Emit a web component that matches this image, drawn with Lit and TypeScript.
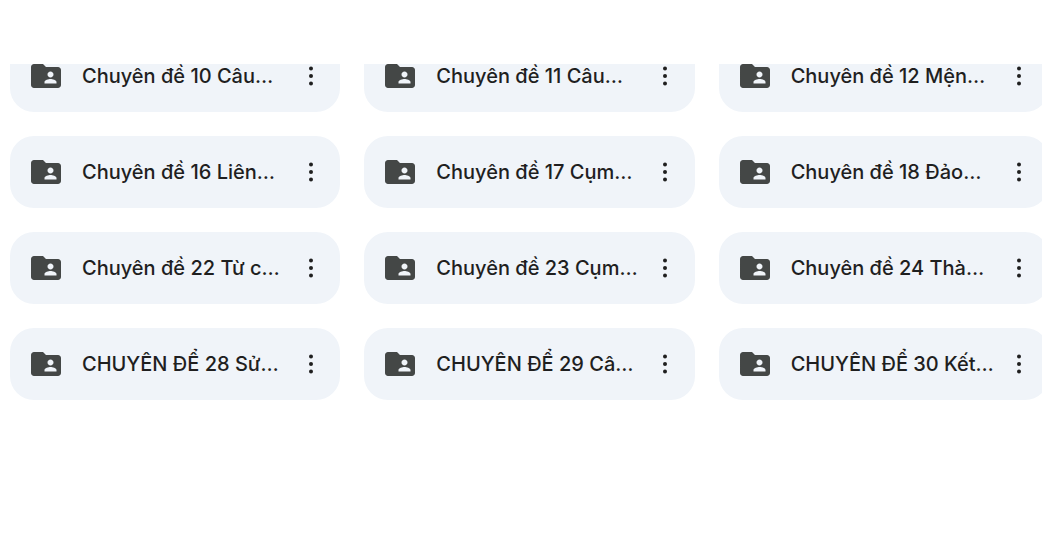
import { LitElement, css, html } from 'lit'
import { customElement } from 'lit/decorators.js'

const folders = [
  'Chuyên đề 10 Câu…',
  'Chuyên đề 11 Câu…',
  'Chuyên đề 12 Mện…',
  'Chuyên đề 16 Liên…',
  'Chuyên đề 17 Cụm…',
  'Chuyên đề 18 Đảo…',
  'Chuyên đề 22 Từ c…',
  'Chuyên đề 23 Cụm…',
  'Chuyên đề 24 Thà…',
  'CHUYÊN ĐỂ 28 Sử…',
  'CHUYÊN ĐỂ 29 Câ…',
  'CHUYÊN ĐỂ 30 Kết…',
]

@customElement('app-root')
export class AppRoot extends LitElement {
  static styles = css`
    :host {
      display: block;
      width: 1042px;
      height: 553px;
      overflow: hidden;
      background: #fff;
      font-family: Inter, Roboto, sans-serif;
    }
    .scroller {
      margin-top: 64px;
      height: 489px;
      overflow: hidden;
    }
    .grid {
      display: grid;
      grid-template-columns: repeat(3, 330.33px);
      gap: 24px;
      width: 1040px;
      margin-top: -24px;
      padding-left: 10px;
    }
    .card {
      display: flex;
      align-items: center;
      height: 72px;
      padding-left: 18px;
      border-radius: 24px;
      background: #f0f4f9;
    }
    .folder {
      flex: none;
      width: 36px;
      height: 36px;
      fill: #444746;
    }
    .name {
      flex: 1;
      min-width: 0;
      margin-left: 18px;
      white-space: nowrap;
      font-size: 20px;
      font-weight: 500;
      color: #1f1f1f;
    }
    .more {
      flex: none;
      width: 36px;
      height: 36px;
      margin: 0 11.5px 0 6px;
      fill: #1f1f1f;
    }
  `

  render() {
    return html`
      <div class="scroller">
        <div class="grid">
          ${folders.map(
            (name) => html`
              <div class="card">
                <svg class="folder" viewBox="0 0 24 24">
                  <path
                    d="M20 6h-8l-2-2H4c-1.1 0-1.99.9-1.99 2L2 18c0 1.1.9 2 2 2h16c1.1 0 2-.9 2-2V8c0-1.1-.9-2-2-2zm-5 3c1.1 0 2 .9 2 2s-.9 2-2 2-2-.9-2-2 .9-2 2-2zm4 8h-8v-1c0-1.33 2.67-2 4-2s4 .67 4 2v1z"
                  />
                </svg>
                <span class="name">${name}</span>
                <svg class="more" viewBox="0 0 36 36">
                  <circle cx="18" cy="10.5" r="2" />
                  <circle cx="18" cy="18" r="2" />
                  <circle cx="18" cy="25.5" r="2" />
                </svg>
              </div>
            `
          )}
        </div>
      </div>
    `
  }
}
